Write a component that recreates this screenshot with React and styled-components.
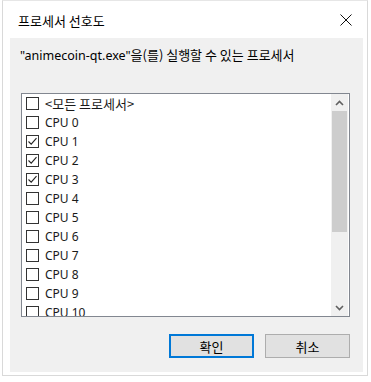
import React from 'react';
import styled, { createGlobalStyle } from 'styled-components';

const Global = createGlobalStyle`
  html, body {
    margin: 0;
    padding: 0;
    background: #ffffff;
  }
  body {
    font-family: "Noto Sans", "Noto Sans CJK KR", sans-serif;
    font-size: 12px;
    color: #000;
  }
`;

const Window = styled.div`
  box-sizing: border-box;
  width: 366px;
  height: 376px;
  margin-left: 2px;
  border: 1px solid #d9d9d9;
  border-top-color: #e6e6e6;
  background: #fff;
  display: flex;
  flex-direction: column;
  padding: 0 4px 3px 7px;
`;

const TitleBar = styled.div`
  height: 37px;
  display: flex;
  align-items: center;
  justify-content: space-between;
  padding: 0 11px 0 8px;
  flex-shrink: 0;
`;

const Title = styled.span`
  font-size: 13px;
  line-height: 1;
  margin-top: 2px;
  font-family: "Noto Sans CJK KR", sans-serif;
`;

const Panel = styled.div`
  flex: 1;
  background: #f0f0f0;
  display: flex;
  flex-direction: column;
  padding: 9px 13px 0 11px;
`;

const Label = styled.div`
  font-size: 12.5px;
  line-height: 16px;
  margin-left: -1px;
  white-space: nowrap;
`;

const Ko = styled.span`
  font-family: "Noto Sans CJK KR", sans-serif;
  font-size: ${(p) => p.$size || '13px'};
`;

const ListBox = styled.div`
  margin-top: 29px;
  height: 224px;
  box-sizing: border-box;
  border: 1px solid #828790;
  background: #fff;
  display: flex;
  overflow: hidden;
`;

const Items = styled.div`
  flex: 1;
  padding: 0 0 0 4px;
  overflow: hidden;
`;

const Row = styled.div`
  height: 19px;
  display: flex;
  align-items: center;
  gap: 6px;
  white-space: nowrap;
`;

const Box = styled.span`
  box-sizing: border-box;
  width: 13px;
  height: 13px;
  border: 1px solid #333;
  background: #fff;
  display: inline-flex;
  align-items: center;
  justify-content: center;
  flex-shrink: 0;
`;

const ItemText = styled.span`
  font-size: 12px;
  line-height: 1;
  color: #1a1a1a;
`;

const ScrollBar = styled.div`
  width: 17px;
  background: #f0f0f0;
  display: flex;
  flex-direction: column;
  align-items: center;
  flex-shrink: 0;
  margin-right: 1px;
`;

const Arrow = styled.div`
  height: 17px;
  width: 100%;
  display: flex;
  align-items: center;
  justify-content: center;
`;

const Track = styled.div`
  flex: 1;
  width: 100%;
  display: flex;
  flex-direction: column;
`;

const Thumb = styled.div`
  height: 121px;
  background: #cdcdcd;
  margin: 0 1px;
`;

const Footer = styled.div`
  display: flex;
  justify-content: flex-end;
  gap: 11px;
  margin-top: 17px;
`;

const Button = styled.button`
  box-sizing: border-box;
  width: 85px;
  height: 24px;
  background: #e1e1e1;
  border: ${(p) => (p.$primary ? '2px solid #0078d7' : '1px solid #adadad')};
  font-family: "Noto Sans CJK KR", sans-serif;
  font-size: 13px;
  color: #000;
  padding: 0;
  cursor: pointer;
`;

const Check = () => (
  <svg width="11" height="11" viewBox="0 0 11 11">
    <path d="M1.5 5.5 L4.2 8.2 L9.5 2.2" fill="none" stroke="#222" strokeWidth="1.1" />
  </svg>
);

const Close = () => (
  <svg width="12" height="12" viewBox="0 0 12 12">
    <path d="M0.5 0.5 L11.5 11.5 M11.5 0.5 L0.5 11.5" stroke="#111" strokeWidth="1" />
  </svg>
);

const Chevron = ({ up }) => (
  <svg width="9" height="6" viewBox="0 0 9 6">
    <path
      d={up ? 'M1 5 L4.5 1.5 L8 5' : 'M1 1 L4.5 4.5 L8 1'}
      fill="none"
      stroke="#606060"
      strokeWidth="1.6"
    />
  </svg>
);

const items = [
  { label: <Ko $size="13px">{'<모든 프로세서>'}</Ko>, key: 'all', checked: false },
  ...Array.from({ length: 11 }, (_, i) => ({
    label: `CPU ${i}`,
    key: `cpu${i}`,
    checked: i >= 1 && i <= 3,
  })),
];

export default function App() {
  return (
    <>
      <Global />
      <Window>
        <TitleBar>
          <Title>프로세서 선호도</Title>
          <Close />
        </TitleBar>
        <Panel>
          <Label>
            "animecoin-qt.exe"<Ko>을(를) 실행할 수 있는 프로세서</Ko>
          </Label>
          <ListBox>
            <Items>
              {items.map((it) => (
                <Row key={it.key}>
                  <Box>{it.checked && <Check />}</Box>
                  <ItemText>{it.label}</ItemText>
                </Row>
              ))}
            </Items>
            <ScrollBar>
              <Arrow>
                <Chevron up />
              </Arrow>
              <Track>
                <Thumb />
              </Track>
              <Arrow>
                <Chevron />
              </Arrow>
            </ScrollBar>
          </ListBox>
          <Footer>
            <Button $primary>확인</Button>
            <Button>취소</Button>
          </Footer>
        </Panel>
      </Window>
    </>
  );
}
